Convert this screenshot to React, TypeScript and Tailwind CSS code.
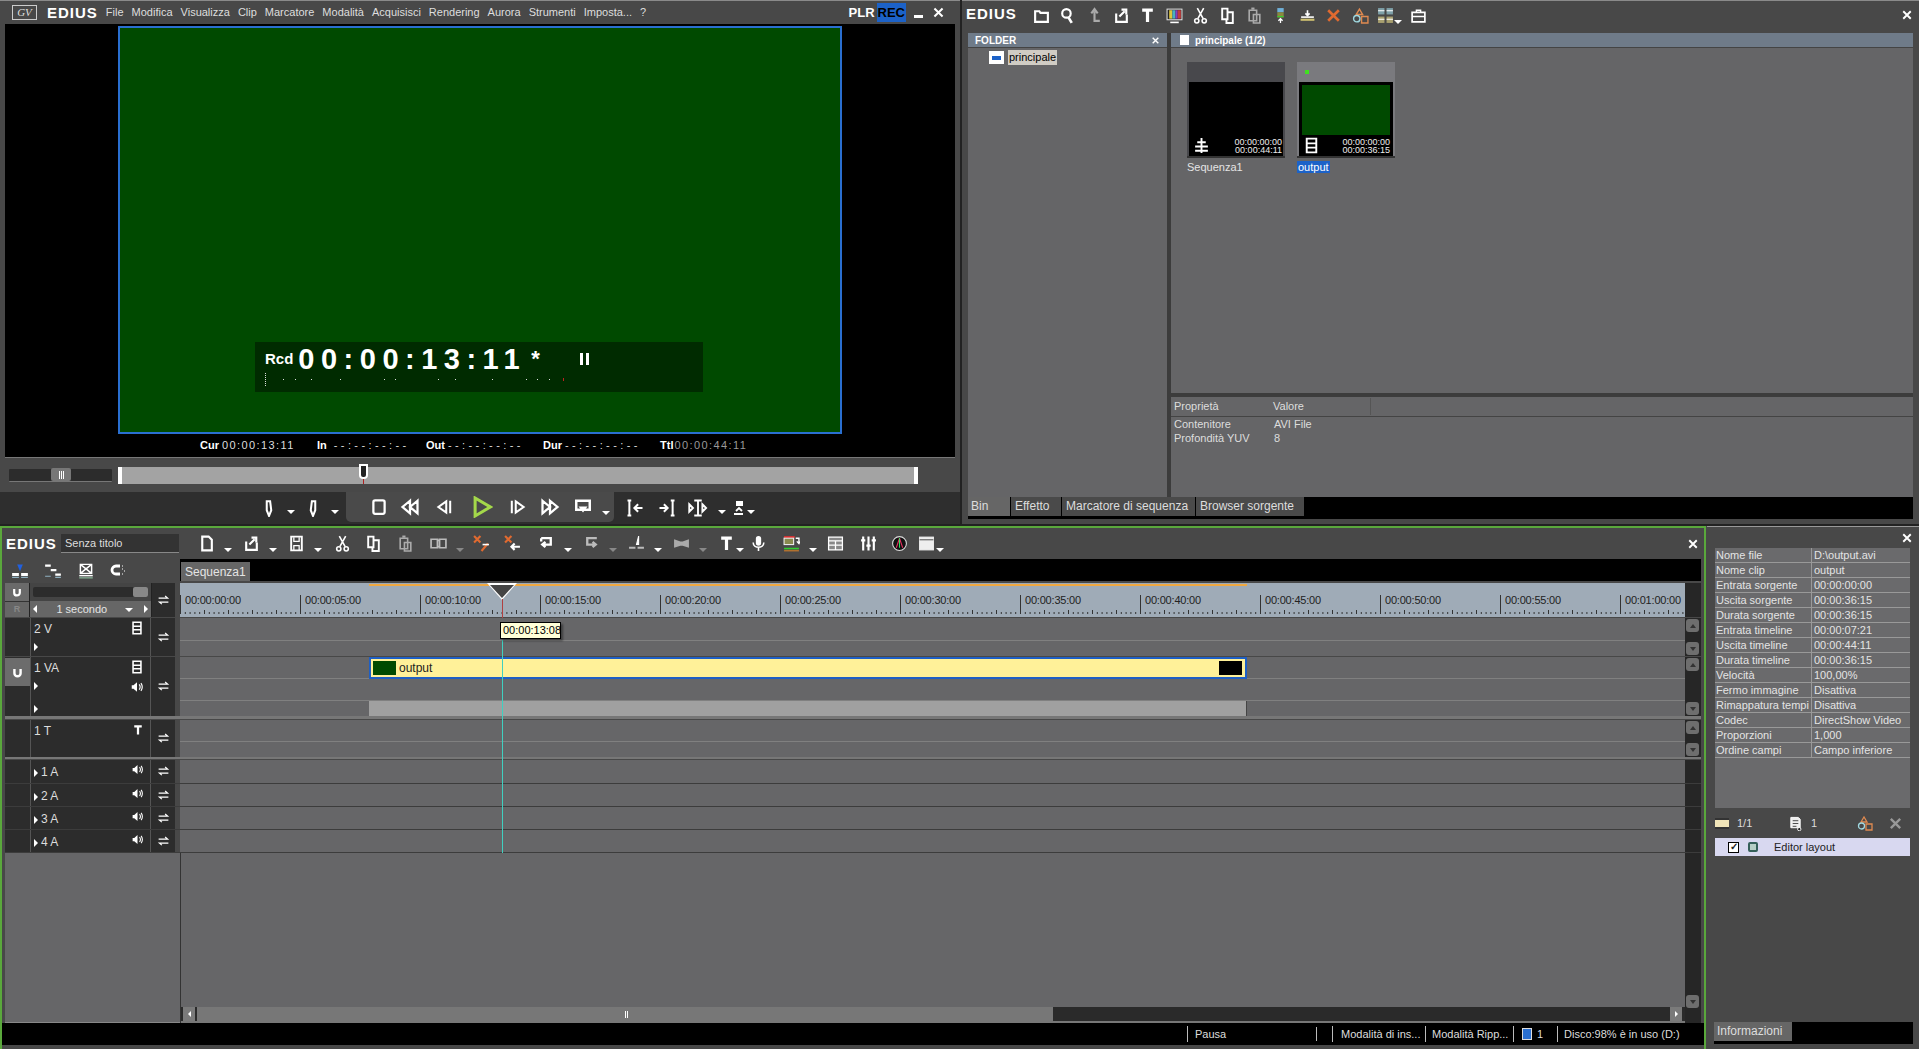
import type { ReactNode } from 'react'

const FONT = 'font-["Liberation_Sans",Arial,sans-serif]'

const menus = ['File', 'Modifica', 'Visualizza', 'Clip', 'Marcatore', 'Modalità', 'Acquisisci', 'Rendering', 'Aurora', 'Strumenti', 'Imposta...', '?']

const clipInfo = [
  ['Nome file', 'D:\\output.avi'],
  ['Nome clip', 'output'],
  ['Entrata sorgente', '00:00:00:00'],
  ['Uscita sorgente', '00:00:36:15'],
  ['Durata sorgente', '00:00:36:15'],
  ['Entrata timeline', '00:00:07:21'],
  ['Uscita timeline', '00:00:44:11'],
  ['Durata timeline', '00:00:36:15'],
  ['Velocità', '100,00%'],
  ['Fermo immagine', 'Disattiva'],
  ['Rimappatura tempi', 'Disattiva'],
  ['Codec', 'DirectShow Video'],
  ['Proporzioni', '1,000'],
  ['Ordine campi', 'Campo inferiore'],
]

const rulerLabels = ['00:00:00:00', '00:00:05:00', '00:00:10:00', '00:00:15:00', '00:00:20:00', '00:00:25:00', '00:00:30:00', '00:00:35:00', '00:00:40:00', '00:00:45:00', '00:00:50:00', '00:00:55:00', '00:01:00:00']

// toolbar glyphs, all drawn on a 16x16 box
const glyphs: Record<string, ReactNode> = {
  folder: <path d="M2 4h4l1 1.500h7v8.500H2z" strokeWidth="2" />,
  search: <><circle cx="7" cy="6" r="4" strokeWidth="2" /><path d="M9 10l3 5" strokeWidth="2.500" /></>,
  up: <path d="M8 14V4M5 6l3-4 3 4M8 13h5" strokeWidth="2" />,
  export: <><path d="M3 6v8h10V7" strokeWidth="2" /><path d="M6 9l5-5M8 2.500h4.500V7" strokeWidth="2" /></>,
  text: <path d="M3 3h10M8 3v11" strokeWidth="3" />,
  bars: <><rect x="1" y="2" width="14" height="10" fill="#222" stroke="#ddd" /><rect x="3" y="3" width="3" height="8" fill="#ddc43c" stroke="none" /><rect x="6" y="3" width="3" height="8" fill="#4ab0c0" stroke="none" /><rect x="9" y="3" width="2" height="8" fill="#8a3cc0" stroke="none" /><rect x="11" y="3" width="3" height="8" fill="#c03c3c" stroke="none" /><path d="M4 14.500h8" strokeWidth="1.500" /></>,
  layer: <><rect x="1" y="1" width="10" height="2" fill="#d83030" stroke="none" /><rect x="1" y="3" width="9" height="6" fill="#8a8a50" stroke="#eee" /><path d="M12 3h3v4M13 6l2 2 1-2" strokeWidth="1.300" /><rect x="1" y="12" width="14" height="1.500" fill="#30d030" stroke="none" /><rect x="1" y="14" width="14" height="1.500" fill="#b07030" stroke="none" /></>,
  cut: <><circle cx="4.500" cy="13" r="2" strokeWidth="1.500" /><circle cx="11.500" cy="13" r="2" strokeWidth="1.500" /><path d="M5.500 11L11 1M10.500 11L5 1" strokeWidth="1.500" /></>,
  copy: <><path d="M3 1.500h5v10H3z" strokeWidth="1.800" /><path d="M8 5h5v10H7v-3" strokeWidth="1.800" /></>,
  paste: <><path d="M3 3h7v10H3z" strokeWidth="1.500" /><path d="M7 7h6v8H7z" strokeWidth="1.500" /><path d="M5 1.500h3" strokeWidth="2" /></>,
  page: <path d="M4 1.500h6l3 3v10H4z" strokeWidth="2" />,
  save: <><path d="M3 1.500h10v13H3z" strokeWidth="1.800" /><path d="M5.500 2v4h5V2M5.500 14v-4h5v4" strokeWidth="1.200" /></>,
  book: <path d="M1 4h6v8H1zM9 4h6v8H9zM7 5l2 0M7 11h2" strokeWidth="1.600" />,
  bowtie: <path d="M1 4l6 2 2 0 6-2v8l-6-2H7l-6 2z" fill="#aaa" stroke="none" />,
  undo: <path d="M3 3h9v6H5M7 6.500L4 9l3 2.500M3 3v3" strokeWidth="2.200" />,
  redo: <path d="M13 3H4v6h7M9 6.500L12 9l-3 2.500" strokeWidth="2.200" />,
  mic: <><rect x="5.500" y="1" width="5" height="9" rx="2.500" fill="#fff" stroke="none" /><path d="M3 7c0 6 10 6 10 0M8 12v3" strokeWidth="1.500" /></>,
  grid: <><rect x="1.500" y="2" width="13" height="12" fill="#888" strokeWidth="1.200" /><path d="M1.500 5.500h13M1.500 9.500h13M8 5.500V14" strokeWidth="1.200" /></>,
  quad: <><rect x="1" y="1" width="6" height="6" fill="#7ea0a8" stroke="none" /><rect x="9" y="1" width="6" height="6" fill="#7ea0a8" stroke="none" /><rect x="1" y="9" width="6" height="6" fill="#a8a070" stroke="none" /><rect x="9" y="9" width="6" height="6" fill="#a8a070" stroke="none" /><path d="M1 3.500h6M9 3.500h6M1 11.500h6M9 11.500h6" stroke="#fff" /></>,
  mixer: <path d="M3 1.500v13M8 1.500v13M13 1.500v13M1 5h4M6 10h4M11 5h4" strokeWidth="2" />,
  win: <><rect x="1.500" y="2" width="13" height="12" fill="#eee" stroke="#eee" /><path d="M1.500 4.500h13" stroke="#555" /></>,
  film: <path d="M3.500 1.500h9v13h-9zM3.500 6h9M3.500 10h9" strokeWidth="1.800" />,
  seq: <path d="M8 1v14M4 5h8M2 9h12M2 13h12" strokeWidth="1.800" />,
  speaker: <><path d="M2 6h2l4-3.500v11L4 10H2z" fill="#fff" stroke="none" /><path d="M10.500 5c1.500 2 1.500 4 0 6M12.500 3.500c2 3 2 6 0 9" strokeWidth="1.300" /></>,
  swap: <path d="M2 5h11l-3-2.500M14 10H3l3 2.500" strokeWidth="1.500" />,
  magnet: <path d="M3.500 3v6a4.500 4.500 0 009 0V3" strokeWidth="3.500" />,
  closeX: <path d="M3 3l10 10M13 3L3 13" strokeWidth="2.500" />,
  delCut: <><path d="M1 1l6 6M7 1L1 7" stroke="#e06a30" strokeWidth="2" /><path d="M8 15l6-7" strokeWidth="2" stroke="#e06a30" /><path d="M9 9h6" strokeWidth="1.500" /></>,
  delLeft: <><path d="M1 1l6 6M7 1L1 7" stroke="#e06a30" strokeWidth="2" /><path d="M15 11H7M10 8l-3 3 3 3" strokeWidth="2" /></>,
  mkIn: <path d="M6 2h3l1 8-2 5-2-5z" strokeWidth="1.800" />,
  mkOut: <path d="M10 2H7L6 10l2 5 2-5z" strokeWidth="1.800" />,
  stop: <rect x="3" y="2" width="10" height="12" rx="1.500" strokeWidth="2" />,
  rew: <path d="M8 3L2 8l6 5zM14 3L8 8l6 5z" strokeWidth="1.800" />,
  stepB: <path d="M10 3L3 8l7 5zM13.500 2.500v11" strokeWidth="1.800" />,
  play: <path d="M3 1.500l11 6.500-11 6.500z" strokeWidth="2.200" />,
  stepF: <path d="M6 3l7 5-7 5zM2.500 2.500v11" strokeWidth="1.800" />,
  ffw: <path d="M2 3l6 5-6 5zM8 3l6 5-6 5z" strokeWidth="1.800" />,
  loop: <><path d="M2 2.500h12v8H2z" strokeWidth="2.200" /><path d="M5 8l3 4 3-4z" fill="#fff" /></>,
  goIn: <path d="M2 2h3M2 14h3M3.500 2v12M14 8H8M10.500 5L7.500 8l3 3" strokeWidth="1.600" />,
  goOut: <path d="M14 2h-3M14 14h-3M12.500 2v12M2 8h6M5.500 5l3 3-3 3" strokeWidth="1.600" />,
  split: <path d="M5 2h6M5 14h6M8 2v12M1 5l3 3-3 3zM11.500 5l3 3-3 3z" strokeWidth="1.500" />,
  sync: <><rect x="5" y="1" width="7" height="5" fill="#fff" stroke="none" /><path d="M3 14h9M5 11l3-3 3 3" strokeWidth="1.800" /></>,
  matte: <><rect x="5" y="1" width="6" height="4" fill="#6fb0d8" stroke="none" /><rect x="5" y="5" width="6" height="5" fill="#8a8a40" stroke="none" /><path d="M5 9h6" stroke="#30d030" /><path d="M8 15v-3M6 13l2-2 2 2" strokeWidth="1.200" /></>,
  flat: <><path d="M1.500 12h13" strokeWidth="2" stroke="#cfc070" /><path d="M2 9.500h12" strokeWidth="1.500" /><path d="M8 3v5M6 6l2 2 2-2" strokeWidth="1.500" /></>,
  bag: <><path d="M2 5h12v9H2z" strokeWidth="1.600" /><path d="M6 5V3h4v2M2 9h12" strokeWidth="1.300" /></>,
  ripple: <><path d="M1 12h6M9 12h6" strokeWidth="2.500" /><path d="M1 14.500h6M9 14.500h6" stroke="#8fb0c0" /><path d="M5.500 3h5L8 9z" fill="#2060e0" stroke="none" /></>,
  stair: <><path d="M1 4h5M10 12h5M6 8h5" strokeWidth="2" /><path d="M1 13.500h5M10 14.500h5" stroke="#8fb0c0" /></>,
  link: <><path d="M3 3h10v8H3zM3 3l10 8M13 3L3 11" strokeWidth="1.300" /><path d="M2 13h12" strokeWidth="1.300" /><path d="M2 15h12" stroke="#8fc0a0" /></>,
  snap: <><path d="M10 4H6a4 4 0 000 8h4" strokeWidth="2.800" /><path d="M12 4h1M12 7h1M12 12h1M14 9h1" strokeWidth="1.200" /></>,
  mkPage: <><path d="M3 1.500h8l2 2v9H3z" fill="#eee" strokeWidth="1" /><path d="M5 5h6M5 8h6M5 11h4" stroke="#444" /><circle cx="12" cy="14" r="1.800" fill="#222" stroke="#fff" /></>,
  fade: <><path d="M10 1L8 9h2z" fill="#fff" stroke="#fff" /><path d="M1 12h6M9 12h6" strokeWidth="2" stroke="#bbb" /></>,
  colors: <><circle cx="8" cy="8" r="6.500" fill="#111" stroke="#ddd" /><path d="M8 3L5 12M8 3l3 9" stroke="#e83060" /><path d="M8 3v9" stroke="#30e060" /></>,
  tri: <><path d="M4 7l3-5 3 5zM9 9h6v6H9z" strokeWidth="1.300" stroke="#e08a50" /><circle cx="4.500" cy="11" r="3" stroke="#9fd8e0" strokeWidth="1.300" /></>,
}

function Glyph({ name, size = 16, stroke = '#fff', className }: { name: string; size?: number; stroke?: string; className?: string }) {
  return (
    <svg width={size} height={size} viewBox="0 0 16 16" fill="none" stroke={stroke} className={className}>
      {glyphs[name]}
    </svg>
  )
}

function Drop({ dim }: { dim?: boolean }) {
  return <span className={`mt-[13px] h-0 w-0 border-x-[4px] border-t-[4px] border-x-transparent ${dim ? 'border-t-[#888]' : 'border-t-white'}`} />
}

function SmallDrop({ className }: { className: string }) {
  return <span className={`h-0 w-0 border-x-[4px] border-t-[4px] border-x-transparent border-t-white ${className}`} />
}

function TopTool({ name, stroke }: { name: string; stroke?: string }) {
  return (
    <span className="flex w-[26.600px] justify-center">
      <Glyph name={name} size={17} stroke={stroke} />
    </span>
  )
}

// one button of the timeline toolbar, with or without its little arrow
function Tool({ name, stroke, drop, dim, tight, w }: { name: string; stroke?: string; drop?: boolean; dim?: boolean; tight?: boolean; w: string }) {
  return (
    <span className={`flex shrink-0 items-center ${tight ? 'gap-[1px]' : 'gap-[9px]'} ${w}`}>
      <Glyph name={name} size={17} stroke={stroke} />
      {drop && <Drop dim={dim} />}
    </span>
  )
}

function Track({ header, height, children, scroll = true }: { header: ReactNode; height: string; children?: ReactNode; scroll?: boolean }) {
  return (
    <div className={`flex ${height}`}>
      <div className="mr-[5px] flex w-[170px] bg-[#2c2c2c]">{header}</div>
      <div className="flex min-w-0 flex-1 flex-col bg-[#666668]">{children}</div>
      <div className="flex w-[16px] flex-col justify-between bg-[#262626] py-[1px] pl-[1px]">
        {scroll && <ScrollBtn dir="up" />}
        {scroll && <ScrollBtn dir="down" />}
      </div>
    </div>
  )
}

function ScrollBtn({ dir }: { dir: 'up' | 'down' }) {
  return (
    <span className="flex h-[13px] w-[13px] items-center justify-center rounded-[3px] bg-[#6e6e6e]">
      <span className={`h-0 w-0 border-x-[3px] border-x-transparent ${dir === 'up' ? 'border-b-[4px] border-b-[#333]' : 'border-t-[4px] border-t-[#333]'}`} />
    </span>
  )
}

const arrowRight = <span className="h-0 w-0 border-y-[4px] border-l-[4px] border-y-transparent border-l-white" />

function TrackHead({ label, audio, arrow, lower, lift, icon }: { label: string; audio?: boolean; arrow?: boolean; lower?: boolean; lift?: boolean; icon?: ReactNode }) {
  return (
    <>
      <div className={`w-[25px] ${lift ? 'pt-[1px]' : ''}`}>
        {lift && (
          <span className="flex h-[28px] items-center justify-center bg-[#6c6c6c]">
            <Glyph name="magnet" size={11} />
          </span>
        )}
      </div>
      <div className="relative flex-1 border-x border-[#555] pl-[3px] pt-[5px] text-[12px] leading-[13px] text-[#ddd]">
        {audio ? (
          <span className="flex items-center gap-[3px] pt-[1px]">
            {arrowRight}
            {label}
          </span>
        ) : (
          <span>{label}</span>
        )}
        {arrow && <div className="mt-[7px] flex items-center">{arrowRight}</div>}
        {lower && <div className="mt-[15px] flex items-center">{arrowRight}</div>}
        {icon && <span className="absolute right-[6px] top-[3px]">{icon}</span>}
      </div>
    </>
  )
}

function Swap() {
  return (
    <div className="flex w-[24px] items-center justify-center">
      <Glyph name="swap" size={13} />
    </div>
  )
}

export default function App() {
  return (
    <div className={`flex h-[1049px] w-[1919px] flex-col overflow-hidden bg-[#484848] text-[11px] text-[#e4e4e4] ${FONT}`}>
      <div className="flex h-[526px] bg-[#222] pb-[2px]">
        {/* player window */}
        <div className="flex w-[960px] flex-col border-t border-[#8a8a8a] bg-[#484848]">
          <div className="flex h-[23px] items-center pl-[12px] pr-[15px]">
            <span className="mr-[10px] flex h-[15px] w-[25px] items-center justify-center border border-[#ccc] font-['Liberation_Serif',serif] text-[11px] italic text-[#ddd]">GV</span>
            <span className="mr-[8px] text-[15px] font-bold leading-none tracking-[1px] text-white">EDIUS</span>
            <div className="flex gap-[8px] text-[11px] text-[#dedede]">
              {menus.map(m => <span key={m}>{m}</span>)}
            </div>
            <div className="ml-auto flex items-center">
              <span className="mr-[2px] text-[13px] font-bold text-white">PLR</span>
              <span className="mr-[8px] bg-[#1c62c8] px-[1px] text-[13px] font-bold text-black">REC</span>
              <span className="mr-[9px] mt-[8px] h-[3px] w-[9px] bg-white" />
              <Glyph name="closeX" size={13} />
            </div>
          </div>
          <div className="mx-[5px] flex h-[434px] flex-col items-center border-b border-[#777] bg-black">
            <div className="mt-[2px] flex h-[409px] w-[724px] flex-col items-center border-2 border-[#2a6fd0] bg-[#004a00]">
              <div className="ml-[-2px] mt-[314px] h-[50px] w-[448px] bg-[#002b00] px-[10px] pt-[1px]">
                <div className="flex h-[32px] items-center text-white">
                  <span className="mr-[5px] mt-[1px] text-[15px] font-bold">Rcd</span>
                  <span className="text-[29px] font-bold leading-none tracking-[6.500px]">00:00:13:11</span>
                  <span className="ml-[5px] text-[22px] font-bold leading-none">*</span>
                  <span className="ml-[40px] flex gap-[3px]">
                    <span className="h-[12px] w-[3px] bg-white" />
                    <span className="h-[12px] w-[3px] bg-white" />
                  </span>
                </div>
                <svg width="320" height="14" viewBox="0 0 320 14" className="mt-[-2px]">
                  <path d="M.500 0v14M18.500 6v2M30.500 6v2M46.500 6v2M75.500 6v2M119.500 6v2M130.500 6v2M173.500 6v2M190.500 6v2M227.500 6v2M261.500 6v2M272.500 6v2M284.500 6v2" stroke="#ddd" strokeDasharray="1 1" />
                  <path d="M298.500 5v3" stroke="#c02020" />
                </svg>
              </div>
            </div>
            <div className="flex h-[23px] w-full items-center pl-[195px] text-[11px]">
              <span className="flex w-[117px]"><span className="mr-[3px] font-bold text-white">Cur</span><span className="tracking-[1.400px] text-[#ddd]">00:00:13:11</span></span>
              <span className="flex w-[109px]"><span className="mr-[7px] font-bold text-white">In</span><span className="tracking-[3.400px] text-[#ddd]">--:--:--:--</span></span>
              <span className="flex w-[117px]"><span className="mr-[3px] font-bold text-white">Out</span><span className="tracking-[3.400px] text-[#ddd]">--:--:--:--</span></span>
              <span className="flex w-[117px]"><span className="mr-[3px] font-bold text-white">Dur</span><span className="tracking-[3.400px] text-[#ddd]">--:--:--:--</span></span>
              <span className="flex"><span className="mr-[1px] font-bold text-white">Ttl</span><span className="tracking-[1.400px] text-[#999]">00:00:44:11</span></span>
            </div>
          </div>
          <div className="flex h-[34px] items-center pl-[9px]">
            <div className="mr-[6px] flex h-[13px] w-[103px] items-center rounded-[1px] border-b border-[#777] bg-[#2c2c2c] pl-[42px]">
              <span className="flex h-[13px] w-[20px] items-center justify-center gap-px rounded-[2px] bg-[#777]">
                <span className="h-[8px] w-px bg-white" />
                <span className="h-[8px] w-px bg-white" />
                <span className="h-[8px] w-px bg-white" />
              </span>
            </div>
            <div className="relative h-[17px] w-[800px] border-x-[4px] border-white bg-[#a3a3a3]">
              <span className="absolute left-[237px] top-[-3px] h-[15px] w-[9px] rounded-b-[4px] border-2 border-white bg-[#222]" />
              <span className="absolute left-[241px] top-[12px] h-[5px] w-px bg-[#b02020]" />
            </div>
          </div>
          <div className="flex h-[32px] items-stretch bg-[#2e2e2e]">
            <div className="flex w-[346px] shrink-0 items-center pl-[260px]">
              <Glyph name="mkIn" size={18} />
              <SmallDrop className="ml-[9px] mt-[8px]" />
              <Glyph name="mkOut" size={18} className="ml-[9px]" />
              <SmallDrop className="ml-[9px] mt-[8px]" />
            </div>
            <div className="flex h-[30px] w-[268px] shrink-0 items-center rounded-b-[5px] bg-[#4a4a4a] pl-[18px]">
              <span className="flex w-[30px] justify-center"><Glyph name="stop" size={18} /></span>
              <span className="flex w-[32px] justify-center"><Glyph name="rew" size={20} /></span>
              <span className="flex w-[36px] justify-center"><Glyph name="stepB" size={18} /></span>
              <span className="flex w-[40px] justify-center"><Glyph name="play" size={22} stroke="#a4d84a" /></span>
              <span className="flex w-[32px] justify-center"><Glyph name="stepF" size={18} /></span>
              <span className="flex w-[32px] justify-center"><Glyph name="ffw" size={20} /></span>
              <span className="flex w-[34px] justify-center"><Glyph name="loop" size={18} /></span>
              <SmallDrop className="ml-[2px] mt-[12px]" />
            </div>
            <div className="flex items-center pl-[5px]">
              <span className="flex w-[32px] justify-center"><Glyph name="goIn" size={20} /></span>
              <span className="flex w-[32px] justify-center"><Glyph name="goOut" size={20} /></span>
              <span className="flex w-[30px] justify-center"><Glyph name="split" size={20} /></span>
              <SmallDrop className="ml-[5px] mt-[8px]" />
              <Glyph name="sync" size={16} className="ml-[5px]" />
              <SmallDrop className="mt-[8px]" />
            </div>
          </div>
        </div>

        {/* bin window */}
        <div className="ml-[2px] flex flex-1 flex-col border-t border-[#8a8a8a] bg-[#484848]">
          <div className="flex h-[32px] items-center pb-[4px] pl-[4px] pr-[6px]">
            <span className="mb-[3px] mr-[5px] w-[57px] text-[15px] font-bold leading-none tracking-[1px] text-white">EDIUS</span>
            <div className="flex items-center">
              <TopTool name="folder" />
              <TopTool name="search" />
              <TopTool name="up" stroke="#aaa" />
              <TopTool name="export" />
              <TopTool name="text" />
              <TopTool name="bars" />
              <TopTool name="cut" />
              <TopTool name="copy" />
              <TopTool name="paste" stroke="#aaa" />
              <TopTool name="matte" />
              <TopTool name="flat" />
              <TopTool name="closeX" stroke="#e06a30" />
              <TopTool name="tri" />
              <span className="flex w-[31px] justify-center"><Glyph name="quad" size={17} /><Drop /></span>
              <TopTool name="bag" />
            </div>
            <Glyph name="closeX" size={12} className="ml-auto" />
          </div>
          <div className="mx-[6px] flex h-[464px] gap-[4px] bg-[#3c3c3c]">
            <div className="flex w-[199px] flex-col bg-[#656567]">
              <div className="flex h-[15px] items-center justify-between border-b border-[#444] bg-[#6f7b89] px-[7px] text-[10px] font-bold text-white">
                FOLDER
                <Glyph name="closeX" size={9} />
              </div>
              <div className="ml-[21px] mt-[2px] flex items-center">
                <span className="mr-[4px] flex h-[13px] w-[15px] items-center border border-white bg-white px-[2px]"><span className="h-[4px] w-full bg-[#1c62c8]" /></span>
                <span className="bg-[#d0ccc4] px-[1px] text-[11px] leading-[15px] text-black">principale</span>
              </div>
            </div>
            <div className="flex flex-1 flex-col">
              <div className="flex h-[15px] items-center border-b border-[#444] bg-[#6f7b89] pl-[9px] text-[10px] font-bold text-white">
                <span className="mr-[6px] h-[10px] w-[9px] bg-white" />
                principale (1/2)
              </div>
              <div className="flex h-[345px] gap-[12px] bg-[#656567] pl-[16px] pt-[14px]">
                <div className="w-[98px]">
                  <div className="flex h-[96px] flex-col border-b-2 border-[#333] bg-[#48484c] px-[2px]">
                    <div className="h-[20px]" />
                    <div className="flex flex-1 items-end justify-between bg-black px-[1px] pb-[2px]">
                      <Glyph name="seq" size={17} className="ml-[3px]" />
                      <span className="text-right text-[9px] leading-[8px] text-[#eee]">00:00:00:00<br />00:00:44:11</span>
                    </div>
                  </div>
                  <div className="mt-[2px] text-[11px] leading-[14px] text-[#e4e4e4]">Sequenza1</div>
                </div>
                <div className="w-[98px]">
                  <div className="flex h-[96px] flex-col border-b-2 border-[#333] bg-[#7a7a7e] px-[2px]">
                    <div className="h-[20px] pl-[6px] pt-[8px]"><span className="block h-[4px] w-[4px] bg-[#40e020]" /></div>
                    <div className="flex flex-1 flex-col bg-black p-[3px] pb-[2px]">
                      <div className="h-[50px] bg-[#004a00]" />
                      <div className="flex flex-1 items-end justify-between">
                        <Glyph name="film" size={17} className="ml-[1px]" />
                        <span className="text-right text-[9px] leading-[8px] text-[#eee]">00:00:00:00<br />00:00:36:15</span>
                      </div>
                    </div>
                  </div>
                  <div className="mt-[2px] text-[11px] leading-[14px]"><span className="bg-[#1c62c8] px-[1px] text-white">output</span></div>
                </div>
              </div>
              <div className="mt-[4px] flex-1 bg-[#656567]">
                <div className="flex h-[20px] items-center border-b border-[#444] text-[11px] text-[#ddd]">
                  <span className="w-[101px] pl-[3px]">Proprietà</span>
                  <span className="w-[99px] border-r border-[#555] pl-[1px]">Valore</span>
                </div>
                <div className="flex pl-[3px] text-[11px] leading-[14px] text-[#ddd]">
                  <div className="w-[100px]">Contenitore<br />Profondità YUV</div>
                  <div>AVI File<br />8</div>
                </div>
              </div>
            </div>
          </div>
          <div className="mx-[6px] flex h-[22px] items-start bg-black text-[12px] leading-[19px] text-[#ddd]">
            <span className="h-[19px] w-[42px] bg-[#666] pl-[3px]">Bin</span>
            <span className="ml-px h-[19px] w-[50px] bg-[#4a4a4a] pl-[4px]">Effetto</span>
            <span className="ml-px h-[19px] w-[133px] bg-[#4a4a4a] pl-[4px]">Marcatore di sequenza</span>
            <span className="ml-px h-[19px] w-[108px] bg-[#4a4a4a] pl-[4px]">Browser sorgente</span>
          </div>
        </div>
      </div>

      <div className="flex flex-1">
        {/* timeline window */}
        <div className="flex w-[1706px] flex-col border-x-2 border-t-2 border-[#5aa83c]">
          <div className="flex h-[31px] items-center pr-[2px]">
            <span className="ml-[4px] w-[55px] text-[15px] font-bold leading-none tracking-[1px] text-white">EDIUS</span>
            <span className="flex h-[19px] w-[118px] items-center border-b border-[#888] bg-[#333] pl-[4px] text-[11px] text-[#ddd]">Senza titolo</span>
            <div className="ml-[18.500px] flex items-center">
              <Tool name="page" drop w="w-[45px]" />
              <Tool name="export" drop w="w-[45px]" />
              <Tool name="save" drop w="w-[46px]" />
              <Tool name="cut" w="w-[31px]" />
              <Tool name="copy" w="w-[32px]" />
              <Tool name="paste" stroke="#aaa" w="w-[33px]" />
              <Tool name="book" stroke="#bbb" drop dim w="w-[43px]" />
              <Tool name="delCut" w="w-[31px]" />
              <Tool name="delLeft" w="w-[34px]" />
              <Tool name="undo" drop w="w-[45px]" />
              <Tool name="redo" stroke="#bbb" drop dim w="w-[45px]" />
              <Tool name="fade" drop w="w-[45px]" />
              <Tool name="bowtie" drop dim w="w-[45px]" />
              <Tool name="text" drop tight w="w-[32px]" />
              <Tool name="mic" w="w-[33px]" />
              <Tool name="layer" drop w="w-[44px]" />
              <Tool name="grid" w="w-[33px]" />
              <Tool name="mixer" w="w-[31px]" />
              <Tool name="colors" w="w-[27px]" />
              <Tool name="win" drop tight w="w-[30px]" />
            </div>
            <Glyph name="closeX" size={12} className="ml-auto mr-[3px]" />
          </div>

          <div className="ml-[3px] flex h-[22px]">
            <div className="flex w-[175px] items-center gap-[15px] pl-[6px]">
              <Glyph name="ripple" size={18} />
              <Glyph name="stair" size={18} />
              <Glyph name="link" size={18} />
              <Glyph name="snap" size={16} />
            </div>
            <div className="mr-[3px] flex-1 bg-black pt-[3px]">
              <span className="ml-px flex h-[19px] w-[69px] items-center bg-[#666] pl-[4px] text-[12px] text-[#e4e4e4]">Sequenza1</span>
            </div>
          </div>
          <div className="h-[2px]" />

          <div className="relative ml-[3px] mr-[3px]">
            <div className="mb-px">
              <Track
                height="h-[34px]"
                scroll={false}
                header={
                  <>
                    <div className="w-[25px] border-r border-[#222]">
                      <span className="flex h-[18px] items-center justify-center bg-[#6a6a6a]"><Glyph name="magnet" size={10} /></span>
                      <span className="flex h-[16px] items-center justify-center border-t border-[#333] bg-[#666] text-[9px] font-bold text-[#888]">R</span>
                    </div>
                    <div className="flex-1 bg-[#666]">
                      <div className="flex h-[18px] items-center bg-[#444] px-[3px]">
                        <span className="flex h-[10px] flex-1 justify-end rounded-[2px] bg-[#2c2c2c]"><span className="h-[10px] w-[15px] rounded-[2px] bg-[#888]" /></span>
                      </div>
                      <div className="flex h-[16px] items-center justify-between px-[3px] text-[11px] text-[#e4e4e4]">
                        <span className="h-0 w-0 border-y-[4px] border-r-[4px] border-y-transparent border-r-white" />
                        <span className="ml-[8px]">1 secondo</span>
                        <span className="ml-[6px] mt-px h-0 w-0 border-x-[4px] border-t-[4px] border-x-transparent border-t-white" />
                        {arrowRight}
                      </div>
                    </div>
                    <div className="flex w-[24px] items-center justify-center border-l border-[#222]"><Glyph name="swap" size={13} /></div>
                  </>
                }
              >
                <div className="flex h-full flex-col bg-[#9fabb7]">
                  <div className="mt-px h-[2px] pl-[189px]"><div className="h-[2px] w-[878px] bg-[#f0a840]" /></div>
                  <div className="mt-[9px] flex h-[14px] items-end">
                    {rulerLabels.map(l => (
                      <span key={l} className="h-[14px] w-[120px] shrink-0 border-l border-[#333] pl-[4px] text-[11px] leading-[11px] tracking-[-0.200px] text-[#222]">{l}</span>
                    ))}
                  </div>
                  <svg width="1504" height="5" viewBox="0 0 1504 5" className="shrink-0">
                    {Array.from({ length: 314 }, (_, i) => {
                      const x = i * 4.8
                      const h = i % 25 === 0 ? 5 : i % 5 === 0 ? 4 : 2
                      return <path key={i} d={`M${x + 0.5} ${5 - h}v${h}`} stroke="#333" />
                    })}
                  </svg>
                </div>
              </Track>
            </div>

            <div className="mb-px">
              <Track height="h-[38px]" header={<><TrackHead label="2 V" arrow icon={<Glyph name="film" size={14} />} /><Swap /></>}>
                <div className="h-[23px] border-b border-[#808080]" />
                <div className="flex-1" />
              </Track>
            </div>

            <div className="border-b-[3px] border-[#777]">
              <Track
                height="h-[59px]"
                header={
                  <>
                    <TrackHead label="1 VA" lift arrow lower icon={<span className="flex flex-col gap-[6px]"><Glyph name="film" size={14} /><Glyph name="speaker" size={14} /></span>} />
                    <Swap />
                  </>
                }
              >
                <div className="h-[22px] border-b border-[#808080]">
                  <div className="ml-[189px] flex h-[22px] w-[878px] items-center border-2 border-[#1f5fc4] bg-[#fff199] pl-[2px] pr-[3px] text-[12px] text-[#222]">
                    <span className="mr-[3px] h-[14px] w-[23px] bg-[#004a00]" />
                    output
                    <span className="ml-auto h-[14px] w-[23px] bg-black" />
                  </div>
                </div>
                <div className="h-[22px] border-b border-[#808080]" />
                <div className="ml-[189px] h-[15px] w-[878px] border-r border-[#444] bg-[#a0a0a0]" />
              </Track>
            </div>
            <div className="h-[1px]" />

            <div className="border-b-[2px] border-[#777]">
              <Track height="h-[37px]" header={<><TrackHead label="1 T" icon={<Glyph name="text" size={12} className="mt-[1px]" />} /><Swap /></>}>
                <div className="h-[22px] border-b border-[#808080]" />
              </Track>
            </div>
            <div className="h-[1px]" />

            {['1 A', '2 A', '3 A', '4 A'].map((t, i) => (
              <div key={t} className="border-b border-[#3c3c3c]">
                <Track
                  height={i === 0 ? 'h-[23px]' : 'h-[22px]'}
                  scroll={false}
                  header={<><TrackHead label={t} audio icon={<Glyph name="speaker" size={13} />} /><Swap /></>}
                />
              </div>
            ))}

            {/* playhead and cursor lie over the tracks */}
            <div className="pointer-events-none absolute left-[482px] top-0 h-0 w-0 border-x-[15px] border-t-[17px] border-x-transparent border-t-white" />
            <div className="pointer-events-none absolute left-[485px] top-[2px] h-0 w-0 border-x-[12px] border-t-[13px] border-x-transparent border-t-[#444]" />
            <div className="pointer-events-none absolute left-[497px] top-[16px] h-[19px] w-px bg-[#b04040]" />
            <div className="pointer-events-none absolute bottom-0 left-[497px] top-[57px] w-px bg-[#40d0c0]" />
            <div className="absolute left-[495px] top-[39px] h-[17px] w-[61px] border border-black bg-[#ffffd8] pl-[2px] text-[11px] leading-[15px] text-black shadow-[2px_2px_2px_rgba(0,0,0,0.4)]">00:00:13:08</div>
          </div>

          <div className="ml-[3px] mr-[3px] flex flex-1">
            <div className="w-[175px] border-b border-[#888] border-r-[#333] bg-[#666668]" />
            <div className="flex flex-1 flex-col border-l border-[#333] bg-[#666668]">
              <div className="flex-1" />
              <div className="flex h-[14px] items-stretch bg-[#2a2a2a]">
                <span className="mx-[2px] flex w-[12px] items-center justify-center bg-[#7a7a7a]"><span className="h-0 w-0 border-y-[3px] border-r-[3px] border-y-transparent border-r-white" /></span>
                <span className="flex w-[856px] items-center justify-center bg-[#777] pl-[2px]"><span className="h-[7px] w-[3px] border-x border-white" /></span>
                <span className="flex-1" />
                <span className="mr-[3px] flex w-[12px] items-center justify-center bg-[#7a7a7a]"><span className="h-0 w-0 border-y-[3px] border-l-[3px] border-y-transparent border-l-white" /></span>
              </div>
              <div className="h-[2px] bg-[#777]" />
            </div>
            <div className="flex w-[16px] flex-col justify-end bg-[#262626] pb-[15px] pl-px"><ScrollBtn dir="down" /></div>
          </div>

          <div className="flex h-[22px] items-center bg-black pl-[1185px] text-[11px] text-[#ddd]">
            <span className="w-[129px] border-l border-[#bbb] pl-[7px]">Pausa</span>
            <span className="h-[14px] w-[16px] border-l border-[#bbb]" />
            <span className="w-[93px] border-l border-[#bbb] pl-[8px]">Modalità di ins...</span>
            <span className="w-[88px] border-l border-[#bbb] pl-[6px]">Modalità Ripp...</span>
            <span className="flex w-[44px] items-center gap-[5px] border-l border-[#bbb] pl-[8px]"><span className="h-[12px] w-[10px] border border-[#ddd] bg-[#2a6fd0]" />1</span>
            <span className="border-l border-[#bbb] pl-[6px]">Disco:98% è in uso (D:)</span>
          </div>
          <div className="h-[4px]" />
        </div>

        {/* information palette */}
        <div className="ml-[1px] flex flex-1 flex-col border-t border-[#999] pt-px">
          <div className="flex h-[20px] items-center justify-end pr-[6px]"><Glyph name="closeX" size={12} /></div>
          <div className="ml-[8px] mr-[9px] flex h-[260px] flex-col bg-[#6a6a6c]">
            {clipInfo.map(([k, v]) => (
              <div key={k} className="flex h-[15px] border-b border-[#999] text-[11px] leading-[14px] text-[#e4e4e4]">
                <span className="w-[97px] border-r border-[#999] pl-[1px]">{k}</span>
                <span className="pl-[2px]">{v}</span>
              </div>
            ))}
          </div>
          <div className="ml-[8px] mr-[9px] flex h-[30px] items-center">
            <span className="mr-[8px] h-[11px] w-[14px] border-y-2 border-[#333] bg-[#f0e4b8]" />
            <span className="w-[51px] text-[11px] text-[#ddd]">1/1</span>
            <Glyph name="mkPage" size={15} />
            <span className="ml-[8px] text-[11px] text-[#ddd]">1</span>
            <Glyph name="tri" size={16} className="ml-[40px]" />
            <Glyph name="closeX" size={15} stroke="#999" className="ml-[15px]" />
          </div>
          <div className="ml-[8px] mr-[9px] flex h-[18px] items-center bg-[#d8d8f0] pl-[13px] text-[11px] text-[#222]">
            <span className="mr-[9px] flex h-[11px] w-[11px] items-center justify-center border border-black bg-white text-[10px] font-bold leading-none">✓</span>
            <span className="mr-[16px] h-[10px] w-[10px] rounded-[2px] border-2 border-[#35605a] bg-[#b6cfc6]" />
            Editor layout
          </div>
          <div className="flex-1" />
          <div className="ml-[7px] mr-[6px] flex h-[22px] items-start bg-black">
            <span className="h-[19px] w-[78px] bg-[#666] pl-[3px] text-[12px] leading-[19px] text-[#ddd]">Informazioni</span>
          </div>
          <div className="h-[5px]" />
        </div>
      </div>
    </div>
  )
}
